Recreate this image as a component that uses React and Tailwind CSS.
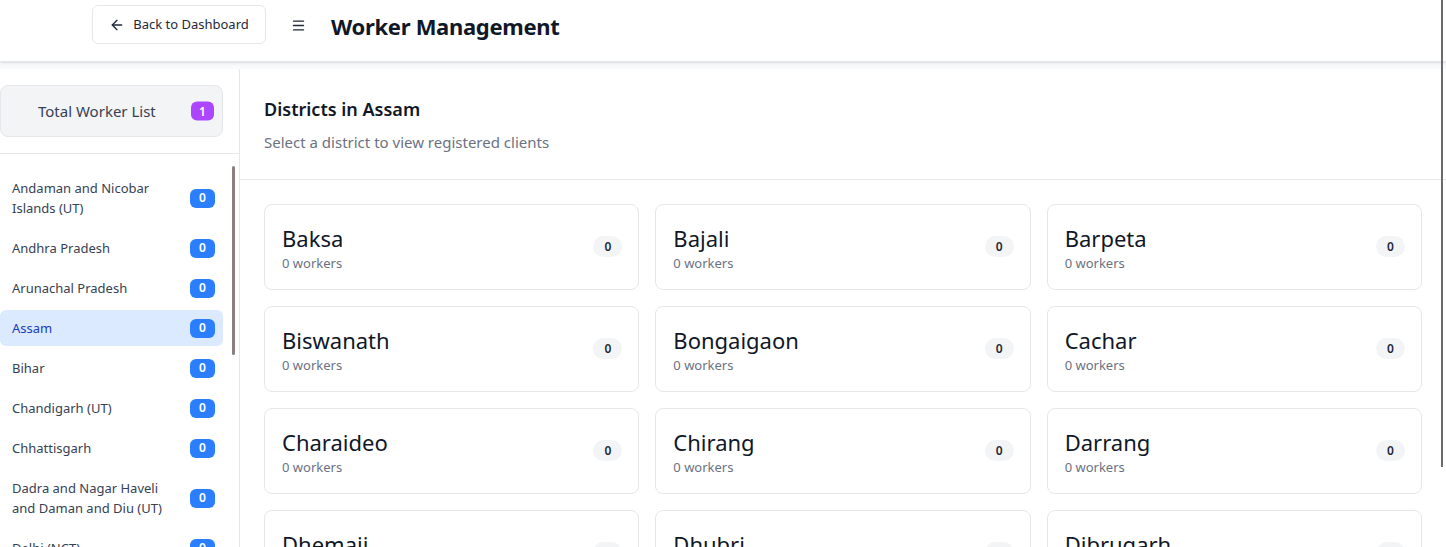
import React from 'react';
import { ArrowLeft, Menu } from 'lucide-react';

const states = [
  { name: 'Andaman and Nicobar Islands (UT)', count: 0 },
  { name: 'Andhra Pradesh', count: 0 },
  { name: 'Arunachal Pradesh', count: 0 },
  { name: 'Assam', count: 0, active: true },
  { name: 'Bihar', count: 0 },
  { name: 'Chandigarh (UT)', count: 0 },
  { name: 'Chhattisgarh', count: 0 },
  { name: 'Dadra and Nagar Haveli and Daman and Diu (UT)', count: 0 },
  { name: 'Delhi (NCT)', count: 0 },
  { name: 'Goa', count: 0 },
];

const districts = [
  'Baksa', 'Bajali', 'Barpeta',
  'Biswanath', 'Bongaigaon', 'Cachar',
  'Charaideo', 'Chirang', 'Darrang',
  'Dhemaji', 'Dhubri', 'Dibrugarh',
];

const App = () => {
  return (
    <div
      className="h-[547px] overflow-hidden bg-gray-50 relative"
      style={{ fontFamily: '"Noto Sans", "Open Sans", sans-serif' }}
    >
      {/* Header */}
      <header className="h-[62px] bg-white border-b border-gray-200 shadow-sm flex items-start pt-[5px]">
        <div className="flex items-center h-[39px]">
          <button className="ml-[92px] h-[39px] w-[174px] flex items-center justify-center gap-2 border border-gray-200 rounded-md bg-white text-[13px] text-gray-800">
            <ArrowLeft className="h-4 w-4" strokeWidth={2} />
            Back to Dashboard
          </button>
          <Menu className="ml-[25px] mt-[2px] h-[15px] w-[15px] text-gray-800" strokeWidth={2.2} />
          <h1 className="ml-[25px] mt-[4px] text-[22px] font-bold text-gray-900 tracking-[-0.3px]">
            Worker Management
          </h1>
        </div>
      </header>

      <div className="flex mt-[7px] h-[478px]">
        {/* Sidebar */}
        <aside className="w-[240px] shrink-0 bg-white border-r border-gray-200 relative">
          <div className="pt-4 pr-4 pb-4">
            <div className="h-[52px] bg-gray-100 border border-gray-200 rounded-lg flex items-center pl-[37px] relative">
              <span className="text-[15px] text-gray-700">Total Worker List</span>
              <span className="absolute right-2 top-1/2 -translate-y-1/2 h-[19px] min-w-[23px] px-1.5 rounded-md bg-purple-500 text-white text-[12px] font-semibold flex items-center justify-center">
                1
              </span>
            </div>
          </div>
          <div className="border-t border-gray-200 pt-4 pr-4 flex flex-col gap-1">
            {states.map((s) => (
              <div
                key={s.name}
                className={`flex items-center justify-between pl-3 pr-2 py-2 rounded-md ${
                  s.active ? 'bg-blue-100 text-blue-800' : 'text-gray-700'
                }`}
              >
                <span className="text-[13px] leading-5 max-w-[150px]">{s.name}</span>
                <span className="h-[19px] min-w-[25px] rounded-md bg-blue-500 text-white text-[12px] font-semibold flex items-center justify-center">
                  {s.count}
                </span>
              </div>
            ))}
          </div>
          <div className="absolute right-[4px] top-[97px] h-[189px] w-[3px] rounded bg-[#8a7f7f]" />
        </aside>

        {/* Main */}
        <main className="flex-1 bg-white">
          <div className="px-6 pt-[26px] pb-[25px] border-b border-gray-200">
            <h2 className="text-[18px] font-semibold text-gray-900 leading-7">Districts in Assam</h2>
            <p className="mt-[8px] text-[15px] text-gray-500">Select a district to view registered clients</p>
          </div>
          <div className="px-6 pt-6 grid grid-cols-3 gap-4">
            {districts.map((d) => (
              <div
                key={d}
                className="h-[86px] border border-gray-200 rounded-lg flex items-center justify-between pl-[17px] pr-4 bg-white"
              >
                <div className="pt-1">
                  <div className="text-[22px] leading-[28px] text-gray-900">{d}</div>
                  <div className="mt-[1px] text-[13px] leading-[20px] text-gray-500">0 workers</div>
                </div>
                <span className="h-[21px] min-w-[29px] rounded-full bg-gray-100 text-[12px] font-semibold text-gray-800 flex items-center justify-center">
                  0
                </span>
              </div>
            ))}
          </div>
        </main>
      </div>

      <div className="absolute right-[3px] top-0 h-[467px] w-[2px] bg-[#6b6b6b]" />
    </div>
  );
};

export default App;
